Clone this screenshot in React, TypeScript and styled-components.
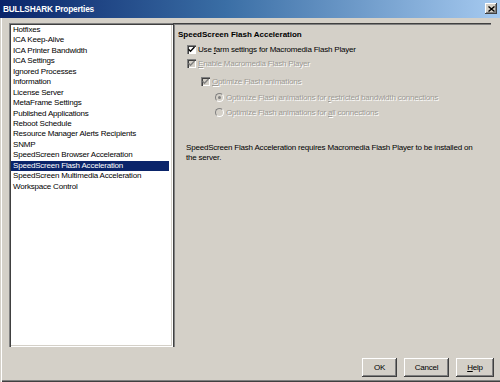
import React from 'react'
import styled, { createGlobalStyle } from 'styled-components'

const GlobalStyle = createGlobalStyle`
    html, body {
        margin: 0;
        padding: 0;
        background: #d4d0c8;
    }
    body {
        font-family: 'Liberation Sans', Arial, sans-serif;
        font-size: 8px;
        letter-spacing: -0.2px;
        color: #000;
    }
`

const Window = styled.div`
    width: 500px;
    height: 382px;
    box-sizing: border-box;
    background: #d4d0c8;
    display: flex;
    flex-direction: column;
    box-shadow: inset 1px 0 0 #d4d0c8, inset 2px 0 0 #ffffff,
        inset 0 -1px 0 #404040, inset 0 -2px 0 #808080;
    overflow: hidden;
`

const TitleBar = styled.div`
    height: 18px;
    display: flex;
    align-items: center;
    justify-content: space-between;
    padding: 0 3px 0 3px;
    background: linear-gradient(to right, #0a246a 0%, #3a6ea5 45%, #a6caf0 100%);
`

const Title = styled.span`
    color: #fff;
    font-weight: bold;
    font-size: 8.3px;
    letter-spacing: -0.2px;
`

const CloseButton = styled.div`
    width: 12px;
    height: 11px;
    background: #d4d0c8;
    box-shadow: inset -1px -1px 0 #404040, inset 1px 1px 0 #fff,
        inset -2px -2px 0 #808080;
    display: flex;
    align-items: center;
    justify-content: center;
    margin-top: -1px;
`

const Body = styled.div`
    flex: 1;
    display: flex;
    flex-direction: column;
    padding: 5px 9px 0 9px;
`

const Main = styled.div`
    height: 324px;
    display: flex;
`

const ListBox = styled.div`
    width: 164px;
    box-sizing: border-box;
    background: #fff;
    padding: 2px 4px 2px 2px;
    box-shadow: inset 1px 1px 0 #808080, inset 2px 2px 0 #404040,
        inset -1px -1px 0 #fff, inset -2px -2px 0 #d4d0c8;
`

const ListItem = styled.div<{ $selected?: boolean }>`
    height: 10.45px;
    line-height: 10.45px;
    padding-left: 2px;
    white-space: nowrap;
    background: ${p => (p.$selected ? '#0a246a' : 'transparent')};
    color: ${p => (p.$selected ? '#fff' : '#000')};
`

const Panel = styled.div`
    flex: 1;
    box-sizing: border-box;
    padding: 6px 0 0 4px;
    border-top: 1px solid #404040;
    border-left: 1px solid #404040;
    box-shadow: inset 1px 1px 0 #808080;
`

const Heading = styled.div`
    font-weight: bold;
    letter-spacing: 0;
    line-height: 10px;
    height: 10px;
`

const OptionRow = styled.div<{ $indent: number; $top: number }>`
    display: flex;
    align-items: center;
    height: 10px;
    margin-top: ${p => p.$top}px;
    padding-left: ${p => p.$indent}px;
    gap: 2px;
`

const Box = styled.span<{ $disabled?: boolean }>`
    width: 9px;
    height: 9px;
    box-sizing: border-box;
    flex: none;
    display: flex;
    align-items: center;
    justify-content: center;
    background: ${p => (p.$disabled ? '#d4d0c8' : '#fff')};
    box-shadow: inset 1px 1px 0 #808080, inset 2px 2px 0 #404040,
        inset -1px -1px 0 #fff;
`

const Radio = styled.span`
    width: 9px;
    height: 9px;
    flex: none;
    box-sizing: border-box;
    border-radius: 50%;
    background: #d4d0c8;
    border: 1px solid;
    border-color: #808080 #fff #fff #808080;
    display: flex;
    align-items: center;
    justify-content: center;
`

const Dot = styled.span`
    width: 3px;
    height: 3px;
    border-radius: 50%;
    background: #808080;
`

const Label = styled.span<{ $disabled?: boolean }>`
    white-space: nowrap;
    color: ${p => (p.$disabled ? '#9c9a94' : '#000')};
    text-shadow: ${p => (p.$disabled ? '1px 1px 0 #fff' : 'none')};
    u {
        text-decoration: underline;
    }
`

const Note = styled.p`
    margin: 26px 0 0 8px;
    line-height: 9.5px;
    white-space: nowrap;
`

const Footer = styled.div`
    display: flex;
    justify-content: flex-end;
    padding: 11px 0 0 0;
    margin-right: -3px;
    gap: 7px;
`

const Button = styled.div<{ $width: number }>`
    width: ${p => p.$width}px;
    height: 19px;
    box-sizing: border-box;
    display: flex;
    align-items: center;
    justify-content: center;
    background: #d4d0c8;
    box-shadow: inset -1px -1px 0 #404040, inset 1px 1px 0 #fff,
        inset -2px -2px 0 #808080;
`

const items = [
    'Hotfixes',
    'ICA Keep-Alive',
    'ICA Printer Bandwidth',
    'ICA Settings',
    'Ignored Processes',
    'Information',
    'License Server',
    'MetaFrame Settings',
    'Published Applications',
    'Reboot Schedule',
    'Resource Manager Alerts Recipients',
    'SNMP',
    'SpeedScreen Browser Acceleration',
    'SpeedScreen Flash Acceleration',
    'SpeedScreen Multimedia Acceleration',
    'Workspace Control',
]

function Check({ disabled }: { disabled?: boolean }) {
    return (
        <Box $disabled={disabled}>
            <svg width="7" height="7" viewBox="0 0 7 7">
                <path
                    d="M0.5 3.2 L2.5 5.2 L6.5 1"
                    fill="none"
                    stroke={disabled ? '#808080' : '#000'}
                    strokeWidth="1.4"
                />
            </svg>
        </Box>
    )
}

export default function App() {
    return (
        <Window>
            <GlobalStyle />
            <TitleBar>
                <Title>BULLSHARK Properties</Title>
                <CloseButton>
                    <svg width="7" height="6" viewBox="0 0 7 6">
                        <path d="M0.5 0.5 L6.5 5.5 M6.5 0.5 L0.5 5.5" stroke="#000" strokeWidth="1.4" />
                    </svg>
                </CloseButton>
            </TitleBar>
            <Body>
                <Main>
                    <ListBox>
                        {items.map(item => (
                            <ListItem
                                key={item}
                                $selected={item === 'SpeedScreen Flash Acceleration'}>
                                {item}
                            </ListItem>
                        ))}
                    </ListBox>
                    <Panel>
                        <Heading>SpeedScreen Flash Acceleration</Heading>
                        <OptionRow $indent={9} $top={4}>
                            <Check />
                            <Label>
                                Use <u>f</u>arm settings for Macromedia Flash Player
                            </Label>
                        </OptionRow>
                        <OptionRow $indent={9} $top={4}>
                            <Check disabled />
                            <Label $disabled>
                                <u>E</u>nable Macromedia Flash Player
                            </Label>
                        </OptionRow>
                        <OptionRow $indent={23} $top={8}>
                            <Check disabled />
                            <Label $disabled>
                                <u>O</u>ptimize Flash animations
                            </Label>
                        </OptionRow>
                        <OptionRow $indent={37} $top={6}>
                            <Radio>
                                <Dot />
                            </Radio>
                            <Label $disabled>
                                Optimize Flash animations for <u>r</u>estricted bandwidth connections
                            </Label>
                        </OptionRow>
                        <OptionRow $indent={37} $top={5}>
                            <Radio />
                            <Label $disabled>
                                Optimize Flash animations for <u>a</u>ll connections
                            </Label>
                        </OptionRow>
                        <Note>
                            SpeedScreen Flash Acceleration requires Macromedia Flash Player to be installed on
                            <br />
                            the server.
                        </Note>
                    </Panel>
                </Main>
                <Footer>
                    <Button $width={35}>OK</Button>
                    <Button $width={45}>Cancel</Button>
                    <Button $width={38}>
                        <span>
                            <u>H</u>elp
                        </span>
                    </Button>
                </Footer>
            </Body>
        </Window>
    )
}
